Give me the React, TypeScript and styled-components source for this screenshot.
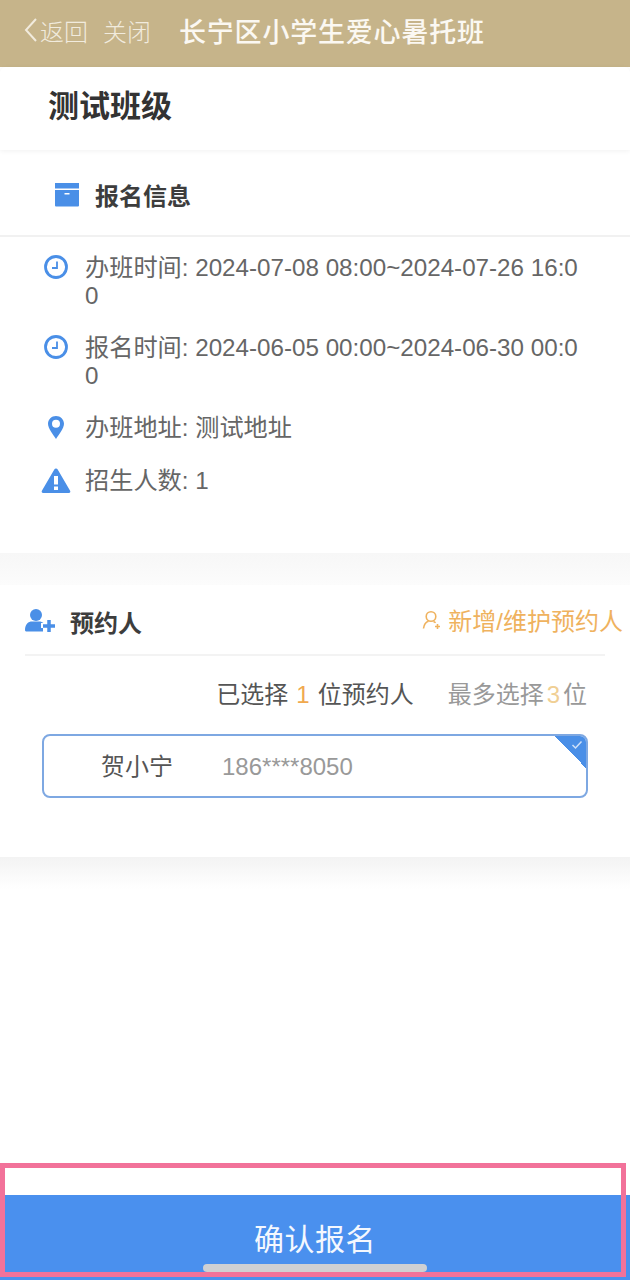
import React from "react";
import styled, { createGlobalStyle } from "styled-components";

const GlobalStyle = createGlobalStyle`
  html, body {
    margin: 0;
    padding: 0;
    background: #fff;
    font-family: "Liberation Sans", "Noto Sans CJK SC", sans-serif;
  }
  * {
    box-sizing: border-box;
  }
`;

const ClockIcon = () => (
  <svg width="26" height="26" viewBox="0 0 26 26" fill="none">
    <circle cx="13" cy="12" r="10.500" stroke="#4a8fe7" strokeWidth="2.800" />
    <path d="M14 6.500v6.500H9" stroke="#4a8fe7" strokeWidth="1.800" />
  </svg>
);

const PinIcon = () => (
  <svg width="26" height="26" viewBox="0 0 26 26">
    <path
      fillRule="evenodd"
      d="M13 1c-4.500 0-8 3.400-8 7.800 0 4.700 5.300 11 8 15.200 2.700-4.200 8-10.500 8-15.200C21 4.400 17.500 1 13 1zm0 3.800a4 4 0 1 1 0 8 4 4 0 0 1 0-8z"
      fill="#4a8fe7"
    />
  </svg>
);

const WarnIcon = () => (
  <svg width="30" height="26" viewBox="0 0 30 26">
    <path
      fillRule="evenodd"
      d="M15 .500c.8 0 1.300.4 1.700 1l12.400 21.200c.6 1 0 2.300-1.200 2.300H2.100C.9 25 .3 23.700.9 22.700L13.300 1.500c.4-.6.900-1 1.700-1zM13 8v8.500h4V8zm0 10.500V22h4v-3.500z"
      fill="#4a8fe7"
    />
  </svg>
);

const BoxIcon = () => (
  <svg width="26" height="25" viewBox="0 0 26 25">
    <path d="M1 1h24v5.500H1z" fill="#4a8fe7" />
    <path
      fillRule="evenodd"
      d="M1 8h24v15.500a1 1 0 0 1-1 1H2a1 1 0 0 1-1-1zm9.500 3v1.500h5V11z"
      fill="#4a8fe7"
    />
  </svg>
);

const UserPlusIcon = () => (
  <svg width="32" height="26" viewBox="0 0 32 26">
    <circle cx="12" cy="7" r="6" fill="#4a8fe7" />
    <path
      d="M1 22c0-6 3.500-8.500 7-8.500h7c2 0 3.500.7 4.500 1.500H17v5h2v3.500H3c-1.200 0-2-.5-2-1.500z"
      fill="#4a8fe7"
    />
    <path d="M25 12v12M19 18h12" stroke="#4a8fe7" strokeWidth="3.500" />
  </svg>
);

const UserOutlineIcon = () => (
  <svg width="20" height="20" viewBox="0 0 20 20" fill="none" stroke="#efb25e" strokeWidth="1.600">
    <circle cx="9" cy="6.500" r="4.800" />
    <path d="M1.500 18.500c.5-4 2.800-6.500 5-7.200M11.500 11.500c.8.300 1.500.7 2.100 1.300M15.500 14v5M13 16.500h5" />
  </svg>
);

const Page = styled.div`
  width: 630px;
  min-height: 1280px;
  display: flex;
  flex-direction: column;
  background: #fff;
  position: relative;
  overflow: hidden;
`;

const Header = styled.header`
  height: 67px;
  background: #c6b48a;
  display: flex;
  align-items: center;
  padding: 0 0 7px 24px;
  color: #f6f1e6;
`;

const BackLink = styled.span`
  display: flex;
  align-items: center;
  gap: 2px;
  font-size: 24px;
  font-weight: 300;
  opacity: 0.9;
  width: 79px;
  white-space: nowrap;
`;

const CloseLink = styled.span`
  font-size: 24px;
  font-weight: 300;
  opacity: 0.9;
  width: 76px;
  white-space: nowrap;
`;

const Title = styled.h1`
  margin: 0;
  font-size: 27px;
  font-weight: 500;
  letter-spacing: 0.800px;
  color: #fbf8f2;
  white-space: nowrap;
`;

const ClassCard = styled.section`
  height: 83px;
  padding: 0 0 11px 48px;
  display: flex;
  align-items: center;
  box-shadow: 0 1px 5px rgba(0, 0, 0, 0.06);
  border-radius: 6px 6px 0 0;
`;

const ClassName = styled.h2`
  margin: 0;
  font-size: 31px;
  font-weight: 700;
  color: #333;
`;

const InfoHead = styled.div`
  margin-top: 5px;
  height: 82px;
  padding: 0 0 2px 54px;
  display: flex;
  align-items: center;
  gap: 15px;
  border-bottom: 2px solid #f1f1f1;
`;

const InfoTitle = styled.span`
  font-size: 24px;
  font-weight: 700;
  color: #3d3d3d;
`;

const InfoBody = styled.div`
  height: 316px;
  padding: 17px 42px 0 42px;
  display: flex;
  flex-direction: column;
`;

const InfoRow = styled.div<{ $gap: number }>`
  display: flex;
  align-items: flex-start;
  margin-bottom: ${(p) => p.$gap}px;
`;

const IconSlot = styled.span`
  width: 43px;
  height: 28px;
  flex: none;
  display: flex;
  align-items: center;
  margin-left: -1px;
  margin-right: 1px;
`;

const CenteredIcon = styled.span`
  width: 30px;
  display: flex;
  justify-content: center;
`;

const InfoText = styled.div`
  flex: 1;
  font-size: 24.200px;
  line-height: 28px;
  color: #666;
  word-break: break-all;
`;

const CardFade = styled.div<{ $height: number; $from: string; $to: string }>`
  height: ${(p) => p.$height}px;
  background: linear-gradient(${(p) => p.$from}, ${(p) => p.$to});
`;

const ContactCard = styled.section`
  height: 272px;
  padding: 0 25px;
`;

const ContactHead = styled.div`
  height: 71px;
  display: flex;
  align-items: center;
  justify-content: space-between;
  border-bottom: 2px solid #f3f3f3;
  padding-top: 3px;
`;

const ContactTitle = styled.div`
  display: flex;
  align-items: center;
  gap: 14px;
  margin-left: -1px;
  font-size: 24px;
  font-weight: 700;
  color: #3d3d3d;
`;

const AddLink = styled.div`
  display: flex;
  align-items: center;
  gap: 6px;
  margin-right: -18px;
  margin-top: -3px;
  font-size: 24px;
  color: #efb25e;
  white-space: nowrap;
`;

const SelectLine = styled.div`
  height: 78px;
  display: flex;
  align-items: center;
  justify-content: flex-end;
  gap: 34px;
  padding: 0 18px 5px 0;
  font-size: 24px;
`;

const Chosen = styled.span`
  color: #555;
`;

const Limit = styled.span`
  color: #999;
`;

const Num = styled.span<{ $pale?: boolean }>`
  color: ${(p) => (p.$pale ? "#f0cf94" : "#f0a94e")};
  margin: 0 ${(p) => (p.$pale ? "3px" : "8px")};
`;

const PersonBox = styled.div`
  position: relative;
  margin: 0 17px;
  height: 64px;
  border: 2px solid #7ea8e2;
  border-radius: 8px;
  display: flex;
  align-items: center;
  padding-left: 57px;
  overflow: hidden;
`;

const PersonName = styled.span`
  width: 121px;
  font-size: 24px;
  color: #555;
  margin-top: -3px;
`;

const PersonPhone = styled.span`
  font-size: 24px;
  color: #999;
  margin-top: 1px;
`;

const Corner = styled.span`
  position: absolute;
  top: 0;
  right: 0;
  width: 32px;
  height: 32px;
  background: linear-gradient(45deg, transparent 50%, #4a8fe7 50%);
`;

const CornerTick = styled.svg`
  position: absolute;
  top: 4px;
  right: 3px;
`;

const Footer = styled.footer`
  margin-top: auto;
`;

const ConfirmButton = styled.button`
  display: block;
  width: 100%;
  height: 85px;
  padding: 4px 0 0;
  border: 0;
  background: #4a90ee;
  color: #f4f8fe;
  font-family: inherit;
  font-size: 30px;
  line-height: 30px;
  letter-spacing: 0.500px;
`;

const HomeBar = styled.span`
  position: absolute;
  left: 203px;
  bottom: 8px;
  width: 224px;
  height: 8px;
  border-radius: 4px;
  background: #cfd0d3;
`;

const Highlight = styled.div`
  position: absolute;
  left: 0;
  top: 1163px;
  width: 626px;
  height: 114px;
  border: 5px solid #f2729a;
  pointer-events: none;
`;

const App = () => {
  return (
    <Page>
      <GlobalStyle />
      <Header>
        <BackLink>
          <svg width="14" height="26" viewBox="0 0 14 26" fill="none">
            <path d="M12 2 2 13l10 11" stroke="#f6f1e6" strokeWidth="2" />
          </svg>
          返回
        </BackLink>
        <CloseLink>关闭</CloseLink>
        <Title>长宁区小学生爱心暑托班</Title>
      </Header>
      <ClassCard>
        <ClassName>测试班级</ClassName>
      </ClassCard>
      <InfoHead>
        <BoxIcon />
        <InfoTitle>报名信息</InfoTitle>
      </InfoHead>
      <InfoBody>
        <InfoRow $gap={24}>
          <IconSlot>
            <CenteredIcon>
              <ClockIcon />
            </CenteredIcon>
          </IconSlot>
          <InfoText>办班时间: 2024-07-08 08:00~2024-07-26 16:00</InfoText>
        </InfoRow>
        <InfoRow $gap={24}>
          <IconSlot>
            <CenteredIcon>
              <ClockIcon />
            </CenteredIcon>
          </IconSlot>
          <InfoText>报名时间: 2024-06-05 00:00~2024-06-30 00:00</InfoText>
        </InfoRow>
        <InfoRow $gap={25}>
          <IconSlot>
            <CenteredIcon>
              <PinIcon />
            </CenteredIcon>
          </IconSlot>
          <InfoText>办班地址: 测试地址</InfoText>
        </InfoRow>
        <InfoRow $gap={0}>
          <IconSlot>
            <CenteredIcon>
              <WarnIcon />
            </CenteredIcon>
          </IconSlot>
          <InfoText>招生人数: 1</InfoText>
        </InfoRow>
      </InfoBody>
      <CardFade $height={32} $from="#f7f7f7" $to="#fcfcfc" />
      <ContactCard>
        <ContactHead>
          <ContactTitle>
            <UserPlusIcon />
            预约人
          </ContactTitle>
          <AddLink>
            <UserOutlineIcon />
            新增/维护预约人
          </AddLink>
        </ContactHead>
        <SelectLine>
          <Chosen>
            已选择<Num>1</Num>位预约人
          </Chosen>
          <Limit>
            最多选择<Num $pale>3</Num>位
          </Limit>
        </SelectLine>
        <PersonBox>
          <PersonName>贺小宁</PersonName>
          <PersonPhone>186****8050</PersonPhone>
          <Corner />
          <CornerTick width="12" height="10" viewBox="0 0 12 10" fill="none">
            <path d="M1.500 5l3 3 6-6.500" stroke="#cfe0f8" strokeWidth="1.500" />
          </CornerTick>
        </PersonBox>
      </ContactCard>
      <CardFade $height={32} $from="#f3f3f3" $to="#ffffff" />
      <Footer>
        <ConfirmButton>确认报名</ConfirmButton>
      </Footer>
      <HomeBar />
      <Highlight />
    </Page>
  );
};

export default App;
